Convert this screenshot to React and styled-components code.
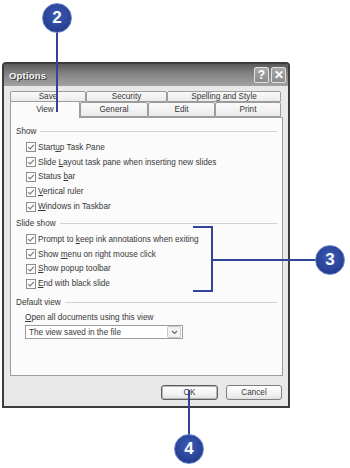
import React from 'react';
import styled, { createGlobalStyle } from 'styled-components';

const GlobalStyle = createGlobalStyle`
  html, body {
    margin: 0;
    padding: 0;
    background: #fff;
  }
  body {
    font-family: "Liberation Sans", Arial, sans-serif;
    color: #383838;
  }
`;

const Page = styled.div`
  position: relative;
  width: 350px;
  height: 468px;
  overflow: hidden;
  background: #fff;
  padding-top: 62px;
  padding-left: 2px;
  box-sizing: border-box;
`;

const Dialog = styled.div`
  width: 288px;
  height: 346px;
  box-sizing: border-box;
  border: 2px solid #3c3c3c;
  border-top-left-radius: 4px;
  border-top-right-radius: 4px;
  background: #e8e8e8;
  display: flex;
  flex-direction: column;
`;

const TitleBar = styled.div`
  height: 22px;
  display: flex;
  align-items: center;
  padding: 0 2px 0 5px;
  background: linear-gradient(#5a5a5a, #838383 45%, #a3a3a3);
`;

const Title = styled.div`
  flex: 1;
  font-size: 9.5px;
  font-weight: bold;
  color: #f4f4f4;
  letter-spacing: 0.2px;
  text-shadow: 1px 1px 0 #3a3a3a;
`;

const CaptionButton = styled.div`
  width: 15px;
  height: 16px;
  margin-left: 2px;
  box-sizing: border-box;
  border: 1px solid #e2e2e2;
  border-radius: 2px;
  background: linear-gradient(#a9a9a9, #8a8a8a);
  color: #fff;
  font-size: 12px;
  font-weight: bold;
  line-height: 14px;
  text-align: center;
`;

const Body = styled.div`
  flex: 1;
  padding: 5px 5px 0 6px;
  display: flex;
  flex-direction: column;
`;

const TabRow = styled.div`
  display: flex;
  height: ${p => p.$height}px;
  align-items: flex-end;
`;

const Tab = styled.div`
  width: ${p => p.$width}px;
  height: ${p => p.$selected ? p.$height + 2 : p.$height}px;
  margin-bottom: ${p => p.$selected ? -1 : 0}px;
  box-sizing: border-box;
  border: 1px solid #9c9c9c;
  border-bottom: ${p => p.$selected ? 'none' : '1px solid #9c9c9c'};
  border-radius: 2px 2px 0 0;
  background: ${p => p.$selected ? '#fbfbfb' : 'linear-gradient(#fafafa, #ebebeb)'};
  font-size: 8.2px;
  color: #383838;
  text-align: center;
  line-height: ${p => p.$selected ? p.$height : p.$height - 2}px;
  position: relative;
  z-index: ${p => p.$selected ? 2 : 1};
`;

const Panel = styled.div`
  height: 259px;
  box-sizing: border-box;
  border: 1px solid #9c9c9c;
  background: #fbfbfb;
  padding: 7px 5px 0 5px;
  display: flex;
  flex-direction: column;
`;

const GroupHeader = styled.div`
  display: flex;
  align-items: center;
  height: 12px;
  margin-top: ${p => p.$top || 0}px;
  margin-bottom: ${p => p.$bottom || 2}px;
  font-size: 8.2px;
  color: #383838;

  &::after {
    content: '';
    flex: 1;
    height: 1px;
    margin-left: 4px;
    background: #d2d2d2;
  }
`;

const CheckRow = styled.div`
  display: flex;
  align-items: center;
  height: 14.8px;
  padding-left: 10px;
  font-size: 8.2px;
  color: #383838;
  white-space: nowrap;
`;

const Box = styled.span`
  width: 10px;
  height: 10px;
  box-sizing: border-box;
  border: 1px solid #8e8e8e;
  background: #fdfdfd;
  margin-right: 2px;
  display: flex;
  align-items: center;
  justify-content: center;
`;

const Key = styled.span`
  text-decoration: underline;
`;

const Caption = styled.div`
  font-size: 8.2px;
  color: #383838;
  height: 12px;
  line-height: 12px;
  padding-left: 9px;
  margin-bottom: 1px;
`;

const Select = styled.div`
  margin-left: 9px;
  width: 158px;
  height: 14px;
  box-sizing: border-box;
  border: 1px solid #9c9c9c;
  background: #fff;
  display: flex;
  align-items: center;
  font-size: 8.2px;
  color: #383838;
`;

const SelectText = styled.div`
  flex: 1;
  padding-left: 3px;
`;

const SelectButton = styled.div`
  width: 12px;
  height: 10px;
  margin-right: 1px;
  border: 1px solid #c9c9c9;
  border-radius: 2px;
  background: #f3f3f3;
  display: flex;
  align-items: center;
  justify-content: center;
`;

const Footer = styled.div`
  display: flex;
  justify-content: flex-end;
  gap: 8px;
  padding-top: 9px;
  padding-right: 1px;
`;

const Button = styled.div`
  width: ${p => p.$width}px;
  height: 15px;
  box-sizing: border-box;
  border: 1px solid ${p => p.$default ? '#5f5f5f' : '#7e7e7e'};
  box-shadow: ${p => p.$default ? 'inset 0 0 0 1px #b9b9b9' : 'none'};
  border-radius: 3px;
  background: linear-gradient(#ffffff, #f0f0f0 70%, #e0e0e0);
  font-size: 8.2px;
  color: #383838;
  text-align: center;
  line-height: 13px;
`;

const Callout = styled.div`
  position: absolute;
  left: ${p => p.$x - 15}px;
  top: ${p => p.$y - 15}px;
  width: 30px;
  height: 30px;
  box-sizing: border-box;
  border-radius: 50%;
  border: 1px solid #6d86c8;
  background: radial-gradient(circle at 50% 40%, #3c5cb6, #263f92 70%, #1f3581);
  color: #fff;
  font-family: "Liberation Sans", Arial, sans-serif;
  font-weight: bold;
  font-size: 17px;
  line-height: 28px;
  text-align: center;
  z-index: 6;
`;

const Line = styled.div`
  position: absolute;
  left: ${p => p.$x}px;
  top: ${p => p.$y}px;
  width: ${p => p.$w}px;
  height: ${p => p.$h}px;
  background: #2f4597;
  z-index: 5;
`;

function Check() {
  return (
    <Box>
      <svg width="8" height="8" viewBox="0 0 8 8">
        <path d="M1.2 4.1 L3.1 6 L6.9 1.8" fill="none" stroke="#7c7c7c" strokeWidth="1.2" />
      </svg>
    </Box>
  );
}

function Option({ children }) {
  return (
    <CheckRow>
      <Check />
      <span>{children}</span>
    </CheckRow>
  );
}

export default function App() {
  return (
    <>
      <GlobalStyle />
      <Page>
        <Dialog>
          <TitleBar>
            <Title>Options</Title>
            <CaptionButton>?</CaptionButton>
            <CaptionButton>✕</CaptionButton>
          </TitleBar>
          <Body>
            <TabRow $height={11}>
              <Tab $width={76} $height={11}>Save</Tab>
              <Tab $width={81} $height={11}>Security</Tab>
              <Tab $width={114} $height={11}>Spelling and Style</Tab>
            </TabRow>
            <TabRow $height={15}>
              <Tab $width={70} $height={15} $selected>View</Tab>
              <Tab $width={68} $height={15}>General</Tab>
              <Tab $width={67} $height={15}>Edit</Tab>
              <Tab $width={66} $height={15}>Print</Tab>
            </TabRow>
            <Panel>
              <GroupHeader $bottom={3}>Show</GroupHeader>
              <Option>Start<Key>u</Key>p Task Pane</Option>
              <Option>Slide <Key>L</Key>ayout task pane when inserting new slides</Option>
              <Option>Status <Key>b</Key>ar</Option>
              <Option><Key>V</Key>ertical ruler</Option>
              <Option><Key>W</Key>indows in Taskbar</Option>

              <GroupHeader $top={4} $bottom={2}>Slide show</GroupHeader>
              <Option>Prompt to <Key>k</Key>eep ink annotations when exiting</Option>
              <Option>Show <Key>m</Key>enu on right mouse click</Option>
              <Option><Key>S</Key>how popup toolbar</Option>
              <Option><Key>E</Key>nd with black slide</Option>

              <GroupHeader $top={5} $bottom={4}>Default view</GroupHeader>
              <Caption><Key>O</Key>pen all documents using this view</Caption>
              <Select>
                <SelectText>The view saved in the file</SelectText>
                <SelectButton>
                  <svg width="7" height="5" viewBox="0 0 7 5">
                    <path d="M1 1 L3.5 3.5 L6 1" fill="none" stroke="#6a6a6a" strokeWidth="1.2" />
                  </svg>
                </SelectButton>
              </Select>
            </Panel>
            <Footer>
              <Button $width={57} $default>OK</Button>
              <Button $width={56}>Cancel</Button>
            </Footer>
          </Body>
        </Dialog>

        <Line $x={56} $y={30} $w={2} $h={82} />
        <Callout $x={57} $y={18}>2</Callout>

        <Line $x={193} $y={226} $w={20} $h={2} />
        <Line $x={211} $y={226} $w={2} $h={66} />
        <Line $x={193} $y={290} $w={20} $h={2} />
        <Line $x={211} $y={259} $w={106} $h={2} />
        <Callout $x={330} $y={260}>3</Callout>

        <Line $x={188} $y={390} $w={2} $h={46} />
        <Callout $x={189} $y={449}>4</Callout>
      </Page>
    </>
  );
}
